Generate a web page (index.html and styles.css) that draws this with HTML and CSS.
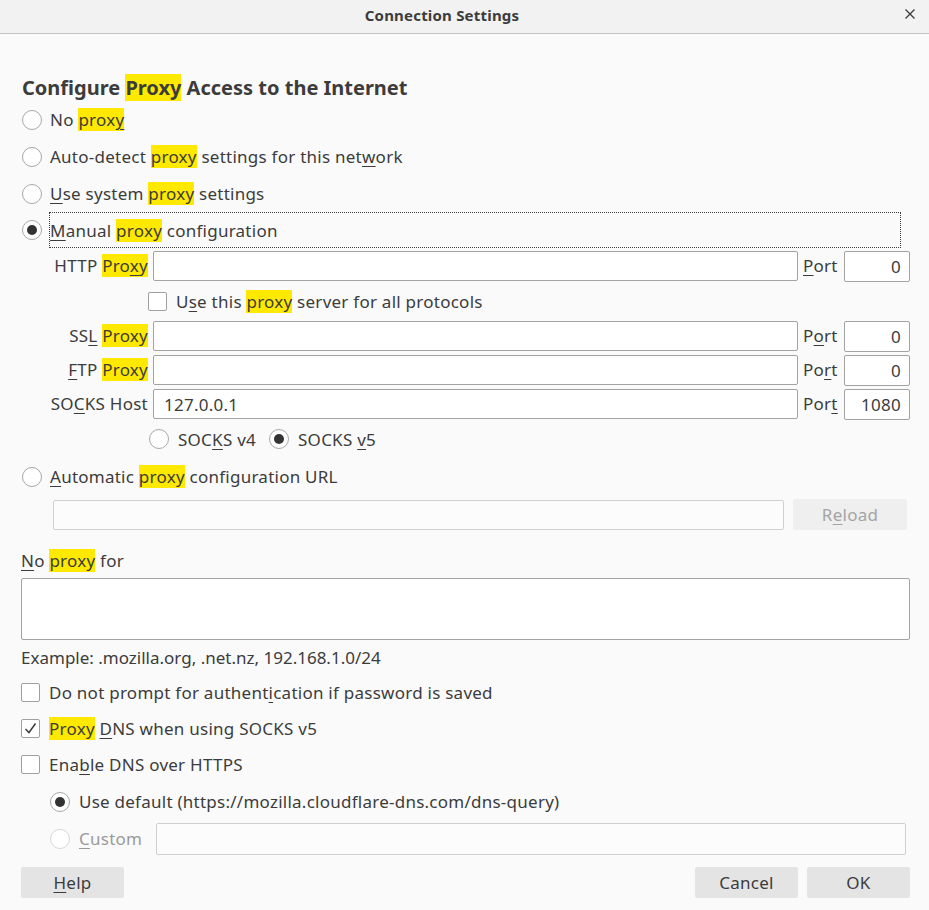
FILE: index.html
```html
<!DOCTYPE html>
<html>
<head>
<meta charset="utf-8">
<link rel="stylesheet" href="styles.css">
</head>
<body>
<div class="titlebar">
  <span class="title">Connection Settings</span>
  <svg class="close" width="12" height="12" viewBox="0 0 12 12"><path d="M1.5 1.5 L10.5 10.5 M10.5 1.5 L1.5 10.5" stroke="#3c3c3c" stroke-width="1.3" fill="none"/></svg>
</div>
<main class="content">
  <h1 class="heading">Configure <mark>Proxy</mark> Access to the Internet</h1>

  <div class="row opt"><span class="radio"></span><span>No <mark>prox<u>y</u></mark></span></div>
  <div class="row opt"><span class="radio"></span><span>Auto-detect <mark>proxy</mark> settings for this net<u>w</u>ork</span></div>
  <div class="row opt"><span class="radio"></span><span><u>U</u>se system <mark>proxy</mark> settings</span></div>
  <div class="row opt manual"><span class="radio on"></span><span class="focus"><span><u>M</u>anual <mark>proxy</mark> configuration</span></span></div>

  <div class="grid">
    <label class="lbl">HTTP <mark>Pro<u>x</u>y</mark></label>
    <span class="field"></span>
    <label class="port"><u>P</u>ort</label>
    <span class="field num">0</span>

    <div class="span-row check-all"><span class="checkbox"></span><span>U<u>s</u>e this <mark>proxy</mark> server for all protocols</span></div>

    <label class="lbl">SS<u>L</u> <mark>Proxy</mark></label>
    <span class="field"></span>
    <label class="port">P<u>o</u>rt</label>
    <span class="field num">0</span>

    <label class="lbl"><u>F</u>TP <mark>Proxy</mark></label>
    <span class="field"></span>
    <label class="port">Po<u>r</u>t</label>
    <span class="field num">0</span>

    <label class="lbl">SO<u>C</u>KS Host</label>
    <span class="field text">127.0.0.1</span>
    <label class="port">Por<u>t</u></label>
    <span class="field num">1080</span>

    <div class="span-row socks"><span class="radio"></span><span class="socks-lbl">SOC<u>K</u>S v4</span><span class="radio on"></span><span>SOCKS <u>v</u>5</span></div>
  </div>

  <div class="row opt auto"><span class="radio"></span><span><u>A</u>utomatic <mark>proxy</mark> configuration URL</span></div>
  <div class="url-row"><span class="field disabled url"></span><span class="btn disabled-btn">R<u>e</u>load</span></div>

  <div class="row noproxy-lbl"><span><u>N</u>o <mark>proxy</mark> for</span></div>
  <div class="textarea"></div>
  <div class="row example">Example: .mozilla.org, .net.nz, 192.168.1.0/24</div>

  <div class="row chk"><span class="checkbox"></span><span>Do not prompt for authent<u>i</u>cation if password is saved</span></div>
  <div class="row chk"><span class="checkbox checked"><svg width="13" height="13" viewBox="0 0 13 13"><path d="M1.5 7 L5 10.5 L11.5 1.5" stroke="#3c3c3c" stroke-width="1.5" fill="none"/></svg></span><span><mark>Proxy</mark> <u>D</u>NS when using SOCKS v5</span></div>
  <div class="row chk last"><span class="checkbox"></span><span>Ena<u>b</u>le DNS over HTTPS</span></div>
  <div class="row doh"><span class="radio on"></span><span>Use default (https://mozilla.cloudflare-dns.com/dns-query)</span></div>
  <div class="row doh custom"><span class="radio dis"></span><span class="custom-lbl"><u>C</u>ustom</span><span class="field disabled custom-field"></span></div>

  <div class="buttons">
    <span class="btn"><u>H</u>elp</span>
    <span class="spacer"></span>
    <span class="btn">Cancel</span>
    <span class="btn">OK</span>
  </div>
</main>
</body>
</html>
```
FILE: styles.css
```css
html, body {
  margin: 0;
  padding: 0;
  background: #fafafa;
}
body {
  font-family: "Noto Sans", "DejaVu Sans", sans-serif;
  font-size: 17px;
  letter-spacing: 0.25px;
  color: #3c3c3c;
  width: 929px;
  height: 910px;
  overflow: hidden;
}
mark {
  background: #ffe900;
  color: inherit;
}
u {
  text-underline-offset: 3px;
  text-decoration-thickness: 1px;
}
.titlebar {
  box-sizing: border-box;
  height: 34px;
  padding: 0 45px 4px 0;
  background: #f2f2f2;
  border-bottom: 1px solid #c4c4c4;
  display: flex;
  align-items: center;
  justify-content: center;
  position: relative;
}
.title {
  font-weight: bold;
  font-size: 15px;
  letter-spacing: 0.2px;
  color: #3c3c3c;
}
.close {
  position: absolute;
  right: 13px;
  top: 8px;
}
.content {
  display: flex;
  flex-direction: column;
  padding: 0 19px 0 21px;
}
.heading {
  margin: 41px 0 0 1px;
  height: 26px;
  line-height: 26px;
  font-size: 20px;
  letter-spacing: 0;
  font-weight: bold;
}
.row {
  display: flex;
  align-items: center;
  white-space: nowrap;
}
.opt {
  height: 37px;
  gap: 8px;
}
.manual {
  height: 34px;
  margin-top: 1px;
}
.focus {
  flex: 1;
  align-self: stretch;
  display: flex;
  align-items: center;
  outline: 1px dotted #3c3c3c;
  margin-right: 10px;
}
.radio {
  width: 18px;
  height: 18px;
  border: 1px solid #a8a8a8;
  border-radius: 50%;
  background: #fff;
  flex: none;
  display: flex;
  align-items: center;
  justify-content: center;
  margin-left: 1px;
}
.radio.on::after {
  content: "";
  width: 10px;
  height: 10px;
  border-radius: 50%;
  background: #333;
}
.radio.dis {
  border-color: #d6d6d6;
}
.checkbox {
  width: 17px;
  height: 17px;
  border: 1px solid #a0a0a0;
  border-radius: 2px;
  background: #fff;
  flex: none;
  display: flex;
  align-items: center;
  justify-content: center;
}
.grid {
  display: grid;
  grid-template-columns: 108px 645px 36px 66px;
  grid-template-rows: 30px 40px 34px 34px 30px 40px;
  column-gap: 5px;
  margin: 4px 0 0 19px;
  align-items: start;
}
.lbl {
  text-align: right;
  white-space: nowrap;
  line-height: 30px;
  height: 30px;
}
.port {
  padding-left: 0;
  line-height: 30px;
  height: 30px;
}
.field {
  box-sizing: border-box;
  height: 30px;
  border: 1px solid #a3a3a3;
  border-radius: 2px;
  background: #fff;
  display: flex;
  align-items: center;
}
.field.num {
  justify-content: flex-end;
  padding-right: 8px;
  height: 31px;
}
.field.text {
  padding-left: 10px;
}
.span-row {
  grid-column: 2 / 5;
  display: flex;
  align-items: center;
  align-self: center;
  gap: 9px;
  margin-left: -5px;
}
.socks-lbl {
  margin-right: 3px;
}
.auto {
  height: 35px;
}
.url-row {
  display: flex;
  align-items: center;
  margin: 5px 0 0 32px;
  gap: 9px;
  height: 31px;
}
.field.disabled {
  border-color: #d0d0d0;
  background: #fcfcfc;
}
.url {
  width: 731px;
  height: 30px;
}
.btn {
  box-sizing: border-box;
  height: 31px;
  width: 103px;
  background: #e4e4e4;
  border-radius: 2px;
  display: flex;
  align-items: center;
  justify-content: center;
}
.disabled-btn {
  width: 114px;
  background: #efefef;
  color: #a4a4a4;
}
.noproxy-lbl {
  height: 32px;
  margin-top: 14px;
}
.textarea {
  box-sizing: border-box;
  height: 62px;
  margin-top: 2px;
  border: 1px solid #a3a3a3;
  border-radius: 2px;
  background: #fff;
}
.example {
  height: 34px;
  letter-spacing: 0;
}
.chk {
  height: 36px;
  gap: 9px;
}
.chk.last {
  height: 37px;
}
.doh {
  height: 37px;
  gap: 9px;
  padding-left: 28px;
}
.custom {
  height: 37px;
}
.custom-lbl {
  color: #9a9a9a;
  margin-right: 5px;
}
.custom-field {
  flex: 1;
  height: 32px;
  margin-right: 4px;
}
.buttons {
  display: flex;
  gap: 9px;
  margin-top: 10px;
}
.spacer {
  flex: 1;
}
```
